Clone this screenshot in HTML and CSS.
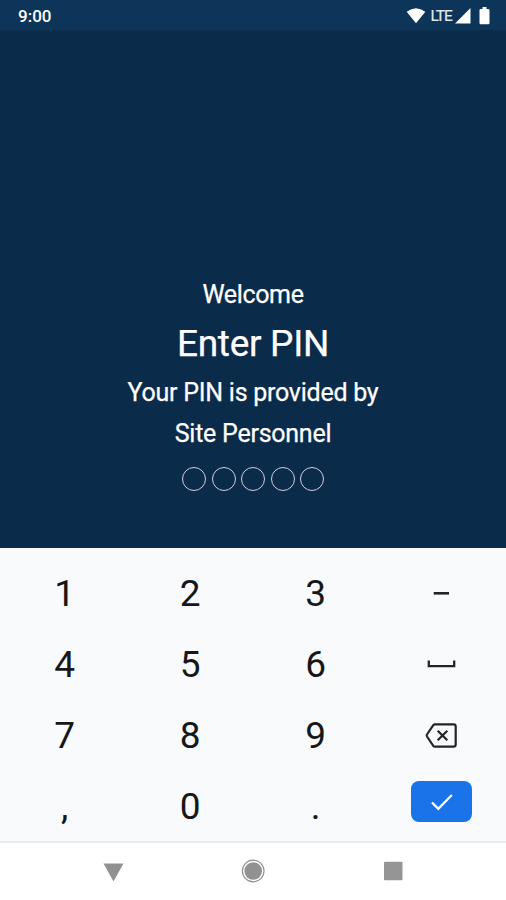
FILE: index.html
```html
<!DOCTYPE html>
<html lang="en">
<head>
<meta charset="utf-8">
<title>Enter PIN</title>
<link rel="stylesheet" href="styles.css">
</head>
<body>
<div class="screen">
  <header class="status">
    <span class="time">9:00</span>
    <svg class="wifi" width="20" height="16" viewBox="0 0 20 16"><path d="M.7 3.7Q10-3.300 19.300 3.700L10 15.300Z" fill="#fff"/></svg>
    <span class="lte">LTE</span>
    <svg class="signal" width="16" height="16" viewBox="0 0 16 16"><path d="M15.500 0V15.500H0Z" fill="#fff"/></svg>
    <svg class="battery" width="11" height="18" viewBox="0 0 11 18"><path d="M3.500 0h4v2H9.300q1.200 0 1.200 1.200V16q0 1.200-1.200 1.200H1.700Q.5 17.200.5 16V3.200Q.5 2 1.700 2H3.500Z" fill="#fff"/></svg>
  </header>
  <main class="prompt">
    <p class="welcome">Welcome</p>
    <h1 class="title">Enter PIN</h1>
    <p class="hint">Your PIN is provided by<br>Site Personnel</p>
    <div class="dots"><i class="dot"></i><i class="dot"></i><i class="dot"></i><i class="dot"></i><i class="dot"></i></div>
  </main>
  <section class="keypad">
    <div class="key">1</div><div class="key">2</div><div class="key">3</div>
    <div class="key"><svg width="32" height="32" viewBox="0 0 32 32"><path d="M8.700 15.300H24" stroke="#222426" stroke-width="2.600"/></svg></div>
    <div class="key">4</div><div class="key">5</div><div class="key">6</div>
    <div class="key"><svg width="32" height="32" viewBox="0 0 32 32" fill="none"><path d="M3.800 11.500V17.200H29.200V11.500" stroke="#222426" stroke-width="2.300"/></svg></div>
    <div class="key">7</div><div class="key">8</div><div class="key">9</div>
    <div class="key"><svg width="34" height="32" viewBox="0 0 34 32" fill="none" stroke="#222426" stroke-width="2.200" stroke-linejoin="round"><path d="M11 4.300H29.500Q31.700 4.300 31.700 6.500V24.500Q31.700 26.700 29.500 26.700H11Q9.900 26.700 9.300 25.900L3 16.500Q2.400 15.500 3 14.500L9.300 5.100Q9.900 4.300 11 4.300Z"/><path d="M13.700 10.700L23.300 20.300M23.300 10.700L13.700 20.300"/></svg></div>
    <div class="key">,</div><div class="key">0</div><div class="key">.</div>
    <div class="key enter"><svg width="61" height="41" viewBox="0 0 61 41"><rect width="61" height="41" rx="8" fill="#1a73e8"/><path d="M21 21.500L27.300 27.800L40.800 14" fill="none" stroke="#fff" stroke-width="2.300"/></svg></div>
  </section>
  <nav class="nav">
    <svg width="24" height="24" viewBox="0 0 24 24"><path d="M2.500 4.500H22.500L12.500 22.500Z" fill="#919191"/></svg>
    <svg width="24" height="24" viewBox="0 0 24 24"><circle cx="12.200" cy="12" r="10.800" fill="none" stroke="#919191" stroke-width="1.200"/><circle cx="12.200" cy="12" r="8.800" fill="#919191"/></svg>
    <svg width="24" height="24" viewBox="0 0 24 24"><rect x="3" y="2.800" width="18.500" height="18.400" rx="1" fill="#959595"/></svg>
  </nav>
</div>
</body>
</html>
```

FILE: styles.css
```css
body { margin: 0; }
.screen { width: 506px; height: 900px; display: flex; flex-direction: column; background: #0a2b49; font-family: Roboto, sans-serif; overflow: hidden; }
.status { height: 30px; box-sizing: border-box; padding: 0 16px 0 18px; display: flex; align-items: center; background: #0d3459; color: #fff; flex: none; }
.time { font-size: 17px; font-weight: 500; line-height: 32px; padding-top: 2px; margin-right: auto; }
.wifi, .signal { margin-top: 1px; }
.lte { font-size: 15.500px; line-height: 30px; letter-spacing: -.9px; margin: 1px 3px 0 4px; color: #e3e8f0; -webkit-text-stroke: .2px #e3e8f0; }
.battery { margin: 1px 0 0 8px; }
.prompt { flex: 1; display: flex; flex-direction: column; align-items: center; color: #fff; padding-top: 245px; text-align: center; }
.welcome, .hint, .title { margin: 0; font-weight: 400; -webkit-text-stroke: .25px #fff; }
.welcome { font-size: 25px; line-height: 40px; letter-spacing: -.35px; }
.title { font-size: 37px; line-height: 58px; letter-spacing: -.3px; }
.hint { font-size: 25px; line-height: 40.500px; letter-spacing: -.25px; }
.dots { display: flex; gap: 5.500px; margin-top: 13px; }
.dot { width: 24px; height: 24px; box-sizing: border-box; border: 1.500px solid #d3cde0; border-radius: 50%; }
.keypad { height: 295px; box-sizing: border-box; padding: 10px 2px 0; display: grid; grid-template-columns: repeat(4, 1fr); grid-template-rows: repeat(4, 71px); background: #f8fafc; border-bottom: 2px solid #e9ebeb; flex: none; }
.key { display: flex; align-items: center; justify-content: center; font-size: 37px; line-height: 71px; color: #161719; }
.enter { padding-bottom: 10px; }
.nav { height: 57px; box-sizing: border-box; padding-bottom: 2px; display: flex; justify-content: center; align-items: center; gap: 116px; background: #fff; flex: none; }
```
